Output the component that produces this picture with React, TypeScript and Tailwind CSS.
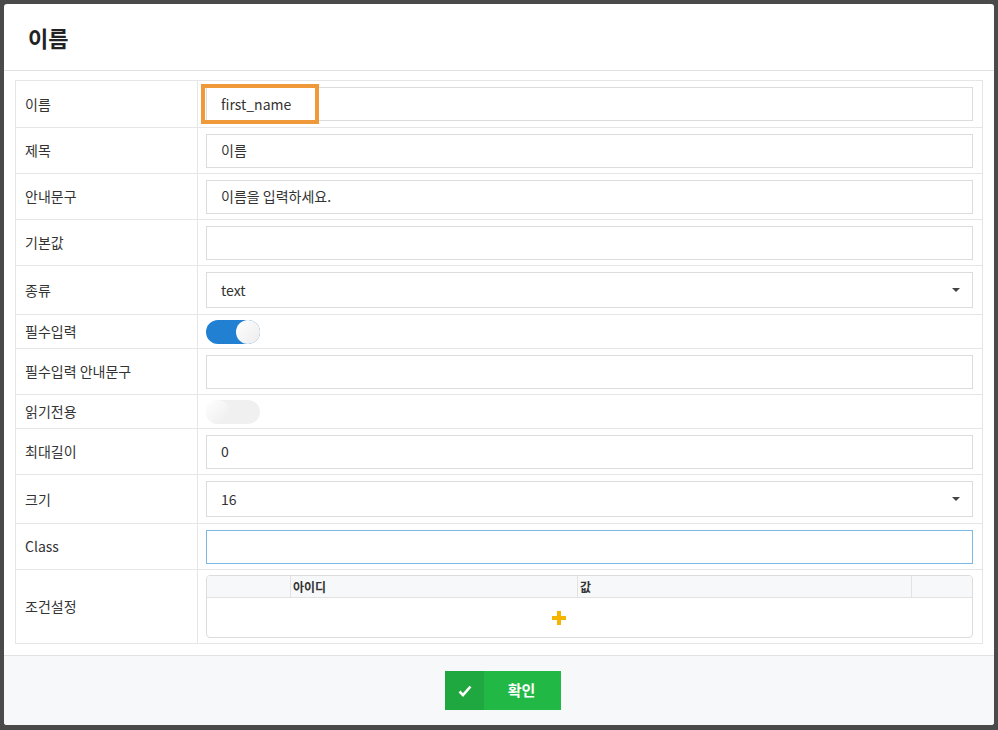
import React from "react";

const F = { fontFamily: '"Noto Sans CJK KR","Roboto",sans-serif' };

function Input({ v = "", cls = "" }: { v?: string; cls?: string }) {
  return (
    <div className={`h-[34px] w-full border bg-white flex items-center px-[14px] text-[14px] text-[#333] ${cls || "border-[#dcdcdc]"}`}>
      {v}
    </div>
  );
}
function Select({ v }: { v: string }) {
  return (
    <div className="h-[36px] w-full border border-[#dcdcdc] bg-white flex items-center justify-between px-[14px] pr-[12px] text-[14px] text-[#333]">
      <span>{v}</span>
      <span className="w-0 h-0 border-l-[4px] border-r-[4px] border-t-[4px] border-l-transparent border-r-transparent border-t-[#444]" />
    </div>
  );
}
function Toggle({ on }: { on: boolean }) {
  return (
    <div className={`w-[54px] h-[24px] rounded-full relative ${on ? "bg-[#2180d2]" : "bg-[#f0f0f0]"}`}>
      <div className={`absolute top-0 w-[24px] h-[24px] rounded-full bg-gradient-to-br from-white to-[#ececec] ${on ? "right-0" : "left-0"}`} />
    </div>
  );
}

function Row({ label, h, children }: { label: string; h: number; children?: React.ReactNode }) {
  return (
    <div className="flex border-b border-[#e6e6e6] last:border-b-0" style={{ height: h }}>
      <div className="w-[182px] shrink-0 border-r border-[#e6e6e6] flex items-center pl-[9px] text-[14px] text-[#333]">{label}</div>
      <div className="flex-1 flex items-center pl-[8px] pr-[9px]">{children}</div>
    </div>
  );
}

export default function App() {
  return (
    <div className="w-[998px] h-[730px] bg-[#4a4a4a] p-[4px] pb-[5px]" style={F}>
      <div className="w-[990px] h-[721px] bg-white rounded-[3px] flex flex-col overflow-hidden">
        <div className="h-[67px] border-b border-[#e2e2e2] flex items-center pl-[24px] text-[22px] font-bold text-[#222]">이름</div>
        <div className="flex-1 px-[11px] pt-[9px]">
          <div className="border border-[#e6e6e6]">
            <Row label="이름" h={47}>
              <div className="relative w-full">
                <Input v="first_name" />
                <div className="absolute -left-[5px] -top-[3px] w-[118px] h-[40px] border-[4px] border-[#f0993a]" />
              </div>
            </Row>
            <Row label="제목" h={46}><Input v="이름" /></Row>
            <Row label="안내문구" h={46}><Input v="이름을 입력하세요." /></Row>
            <Row label="기본값" h={46}><Input /></Row>
            <Row label="종류" h={49}><Select v="text" /></Row>
            <Row label="필수입력" h={34}><Toggle on /></Row>
            <Row label="필수입력 안내문구" h={46}><Input /></Row>
            <Row label="읽기전용" h={34}><Toggle on={false} /></Row>
            <Row label="최대길이" h={46}><Input v="0" /></Row>
            <Row label="크기" h={49}><Select v="16" /></Row>
            <Row label="Class" h={46}>
              <Input cls="border-[#7ab8e6]" v="" />
            </Row>
            <Row label="조건설정" h={73}>
              <div className="w-full h-[63px] border border-[#dcdcdc] rounded-[4px] overflow-hidden flex flex-col">
                <div className="h-[22px] bg-[#f7f8fa] border-b border-[#e2e2e2] flex text-[12px] font-bold text-[#333]">
                  <div className="w-[84px] border-r border-[#e2e2e2]" />
                  <div className="w-[287px] border-r border-[#e2e2e2] pl-[2px] leading-[22px]">아이디</div>
                  <div className="w-[334px] border-r border-[#e2e2e2] pl-[2px] leading-[22px]">값</div>
                  <div className="flex-1" />
                </div>
                <div className="flex-1 flex items-center pl-[344px]">
                  <svg width="16" height="16" viewBox="0 0 16 16"><path d="M8 1v14M1 8h14" stroke="#f4b400" strokeWidth="4" /></svg>
                </div>
              </div>
            </Row>
          </div>
        </div>
        <div className="h-[70px] bg-[#f7f8fa] border-t border-[#e2e2e2] flex items-center justify-center">
          <div className="h-[39px] w-[116px] ml-[8px] bg-[#22b845] flex text-white">
            <div className="w-[39px] bg-[#20a840] flex items-center justify-center">
              <svg width="14" height="12" viewBox="0 0 14 12"><path d="M1.5 6.5l3.5 3.5 7.5-8.5" stroke="white" strokeWidth="2.6" fill="none" /></svg>
            </div>
            <div className="flex-1 flex items-center justify-center text-[15px] font-bold pr-[2px]">확인</div>
          </div>
        </div>
      </div>
    </div>
  );
}
